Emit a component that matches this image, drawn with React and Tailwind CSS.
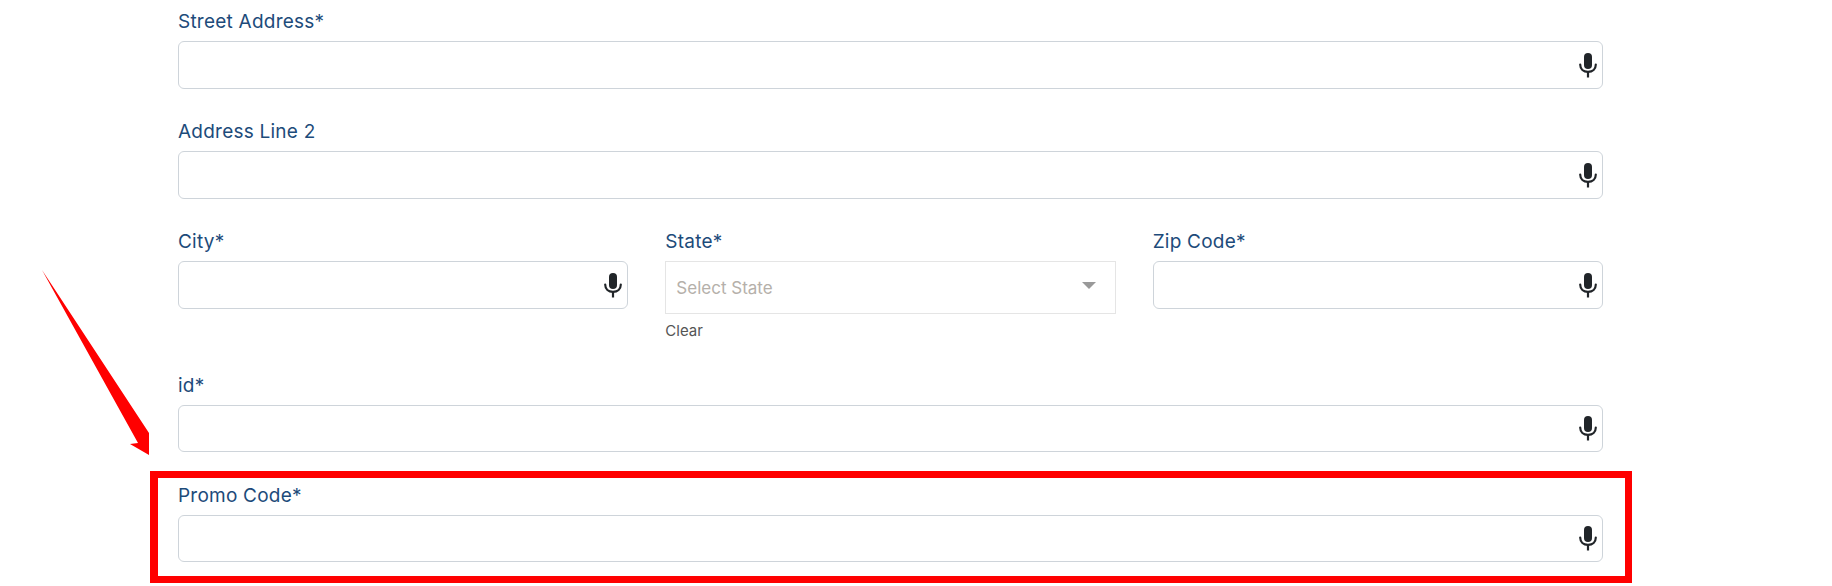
const Mic = () => (
    <svg width="18" height="25" viewBox="0 0 18 25" fill="none" className="shrink-0">
        <rect x="5" y="0" width="8" height="16" rx="4" fill="#212529" />
        <path d="M1.2 11.5c0 4.6 3.3 7.3 7.8 7.3s7.8-2.7 7.8-7.3" stroke="#212529" strokeWidth="2.2" strokeLinecap="round" />
        <path d="M9 19v5.5" stroke="#212529" strokeWidth="2.2" />
    </svg>
);

const Label = ({ children }) => (
    <label className="block h-[34px] pt-px text-[19px] leading-[28px] tracking-[0.23px] text-[#1d4b7a] font-normal">{children}</label>
);

const Field = ({ label, className = "", inputClass = "h-[48px]" }) => (
    <div className={className}>
        <Label>{label}</Label>
        <div className={`flex items-center rounded-md border border-[#ced4da] bg-white pr-[5px] ${inputClass}`}>
            <input type="text" className="h-full min-w-0 flex-1 bg-transparent px-3 outline-none" />
            <Mic />
        </div>
    </div>
);

const StateSelect = () => (
    <div>
        <Label>State*</Label>
        <div className="flex h-[53px] items-center justify-between border border-[#e5e5e5] bg-white pl-[10px] pr-[19px]">
            <span className="pt-[3px] text-[17px] text-[#b5b0aa]">Select State</span>
            <span className="mb-1 h-0 w-0 border-x-[7px] border-t-[7px] border-x-transparent border-t-[#999999]" />
        </div>
        <div className="mt-[7px] text-[15px] leading-[20px] text-[#555555]">Clear</div>
    </div>
);

export default function App() {
    return (
        <div className="relative h-[586px] overflow-hidden bg-white font-['Inter','Open_Sans',sans-serif]">
            <div className="ml-[178px] flex w-[1425px] flex-col pt-[7px]">
                <Field label="Street Address*" className="mb-[28px]" />
                <Field label="Address Line 2" className="mb-[28px]" />
                <div className="mb-[28px] grid h-[116px] grid-cols-3 gap-x-[37px]">
                    <Field label="City*" />
                    <StateSelect />
                    <Field label="Zip Code*" />
                </div>
                <Field label="id*" className="mb-[29px]" inputClass="h-[47px]" />
                <Field label="Promo Code*" inputClass="h-[47px]" />
            </div>

            {/* annotation */}
            <div className="absolute left-[150px] top-[471px] h-[112px] w-[1482px] border-[7px] border-l-[8px] border-[#ff0000]" />
            <svg className="absolute left-0 top-0" width="200" height="470" viewBox="0 0 200 470">
                <polygon points="42,270 149,433 149,455 130,444 138,443" fill="#ff0000" />
            </svg>
        </div>
    );
}
